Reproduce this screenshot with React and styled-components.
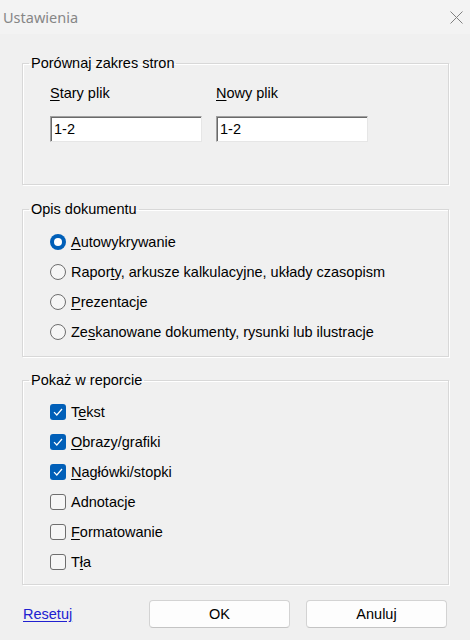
import styled, { createGlobalStyle } from "styled-components";

const GlobalStyle = createGlobalStyle`
  html, body {
    margin: 0;
    padding: 0;
    background: #f0f0f0;
  }
  body {
    font-family: "Liberation Sans", Arial, sans-serif;
    font-size: 14.5px;
    color: #000;
  }
`;

const Window = styled.div`
  width: 470px;
  height: 640px;
  background: #f0f0f0;
  display: flex;
  flex-direction: column;
  overflow: hidden;
`;

const TitleBar = styled.div`
  height: 34px;
  display: flex;
  align-items: center;
  justify-content: space-between;
  padding: 0 7px 0 3px;
  background: #f3f3f3;
`;

const Title = styled.span`
  font-family: "Noto Sans", "Open Sans", sans-serif;
  font-size: 14.5px;
  color: #868686;
`;

const CloseButton = styled.button`
  border: none;
  background: none;
  padding: 0;
  width: 13px;
  height: 13px;
  display: flex;
`;

const Content = styled.div`
  padding: 21px 21px 0 22px;
  display: flex;
  flex-direction: column;
`;

const Group = styled.fieldset`
  margin: 0 0 ${(p) => p.$gap ?? 16}px 0;
  padding: 0;
  border: 1px solid #d8d8d8;
  box-shadow: 1px 1px 0 #fff, inset 1px 1px 0 #fff;
  min-width: 0;
`;

const Legend = styled.legend`
  margin-left: 6px;
  padding: 0 2px;
  line-height: 16px;
`;

const GroupBody = styled.div`
  padding: ${(p) => p.$pad};
`;

const FieldGrid = styled.div`
  display: grid;
  grid-template-columns: 152px 152px;
  column-gap: 14px;
`;

const Field = styled.label`
  display: flex;
  flex-direction: column;
  gap: 15px;
  line-height: 16px;
`;

const TextInput = styled.input`
  box-sizing: border-box;
  width: 100%;
  height: 26px;
  margin: 0;
  padding: 0 3px;
  font-family: "Liberation Sans", Arial, sans-serif;
  font-size: 14.5px;
  color: #000;
  background: #fff;
  border: 1px solid;
  border-color: #a0a0a0 #e6e6e6 #e6e6e6 #a0a0a0;
  box-shadow: inset 1px 1px 0 #6a6a6a;
  outline: none;
`;

const OptionList = styled.div`
  display: flex;
  flex-direction: column;
`;

const Option = styled.label`
  height: 30px;
  display: flex;
  align-items: center;
  gap: 5px;
  line-height: 16px;
`;

const RadioMark = styled.span`
  box-sizing: border-box;
  width: 16px;
  height: 16px;
  border-radius: 50%;
  flex: none;
  background: ${(p) => (p.$on ? "#005fb8" : "#f6f6f6")};
  border: ${(p) => (p.$on ? "none" : "1px solid #6e6e6e")};
  display: flex;
  align-items: center;
  justify-content: center;
  &::after {
    content: "";
    display: ${(p) => (p.$on ? "block" : "none")};
    width: 8px;
    height: 8px;
    border-radius: 50%;
    background: #fff;
  }
`;

const CheckMark = styled.span`
  box-sizing: border-box;
  width: 16px;
  height: 16px;
  border-radius: 3px;
  flex: none;
  background: ${(p) => (p.$on ? "#005fb8" : "#f6f6f6")};
  border: ${(p) => (p.$on ? "none" : "1px solid #6e6e6e")};
  display: flex;
  align-items: center;
  justify-content: center;
`;

const Key = styled.span`
  text-decoration: underline;
  text-underline-offset: 2px;
`;

const Footer = styled.div`
  display: flex;
  align-items: center;
  padding-right: 2px;
`;

const ResetLink = styled.a`
  color: #2020d0;
  text-decoration: underline;
  text-underline-offset: 2px;
  margin-left: 1px;
  cursor: pointer;
`;

const Buttons = styled.div`
  margin-left: auto;
  display: flex;
  gap: 16px;
`;

const Button = styled.button`
  box-sizing: border-box;
  width: 141px;
  height: 28px;
  background: #fdfdfd;
  border: 1px solid #d3d3d3;
  border-bottom-color: #c4c4c4;
  border-radius: 4px;
  font-family: "Liberation Sans", Arial, sans-serif;
  font-size: 14.5px;
  color: #000;
  padding: 0;
`;

const label = (text, key) => {
  if (key == null) return text;
  return (
    <>
      {text.slice(0, key)}
      <Key>{text[key]}</Key>
      {text.slice(key + 1)}
    </>
  );
};

const radios = [
  { text: "Autowykrywanie", key: 0, on: true },
  { text: "Raporty, arkusze kalkulacyjne, układy czasopism", key: 5 },
  { text: "Prezentacje", key: 0 },
  { text: "Zeskanowane dokumenty, rysunki lub ilustracje", key: 2 },
];

const checks = [
  { text: "Tekst", key: 1, on: true },
  { text: "Obrazy/grafiki", key: 0, on: true },
  { text: "Nagłówki/stopki", key: 0, on: true },
  { text: "Adnotacje" },
  { text: "Formatowanie", key: 0 },
  { text: "Tła", key: 1 },
];

const Tick = () => (
  <svg width="10" height="8" viewBox="0 0 10 8">
    <path d="M1 4.2 L3.8 7 L9 1" fill="none" stroke="#fff" strokeWidth="1.2" />
  </svg>
);

export default function App() {
  return (
    <Window>
      <GlobalStyle />
      <TitleBar>
        <Title>Ustawienia</Title>
        <CloseButton aria-label="Zamknij">
          <svg width="13" height="13" viewBox="0 0 13 13">
            <path d="M0.5 0.5 L12.5 12.5 M12.5 0.5 L0.5 12.5" stroke="#808080" strokeWidth="1" />
          </svg>
        </CloseButton>
      </TitleBar>
      <Content>
        <Group>
          <Legend>Porównaj zakres stron</Legend>
          <GroupBody $pad="14px 0 42px 27px">
            <FieldGrid>
              <Field>
                <span>{label("Stary plik", 0)}</span>
                <TextInput defaultValue="1-2" />
              </Field>
              <Field>
                <span>{label("Nowy plik", 0)}</span>
                <TextInput defaultValue="1-2" />
              </Field>
            </FieldGrid>
          </GroupBody>
        </Group>
        <Group $gap={15}>
          <Legend>Opis dokumentu</Legend>
          <GroupBody $pad="10px 0 9px 27px">
            <OptionList>
              {radios.map((r) => (
                <Option key={r.text}>
                  <RadioMark $on={r.on} />
                  <span>{label(r.text, r.key)}</span>
                </Option>
              ))}
            </OptionList>
          </GroupBody>
        </Group>
        <Group $gap={15}>
          <Legend>Pokaż w reporcie</Legend>
          <GroupBody $pad="9px 0 7px 27px">
            <OptionList>
              {checks.map((c) => (
                <Option key={c.text}>
                  <CheckMark $on={c.on}>{c.on && <Tick />}</CheckMark>
                  <span>{label(c.text, c.key)}</span>
                </Option>
              ))}
            </OptionList>
          </GroupBody>
        </Group>
        <Footer>
          <ResetLink>Resetuj</ResetLink>
          <Buttons>
            <Button>OK</Button>
            <Button>Anuluj</Button>
          </Buttons>
        </Footer>
      </Content>
    </Window>
  );
}
